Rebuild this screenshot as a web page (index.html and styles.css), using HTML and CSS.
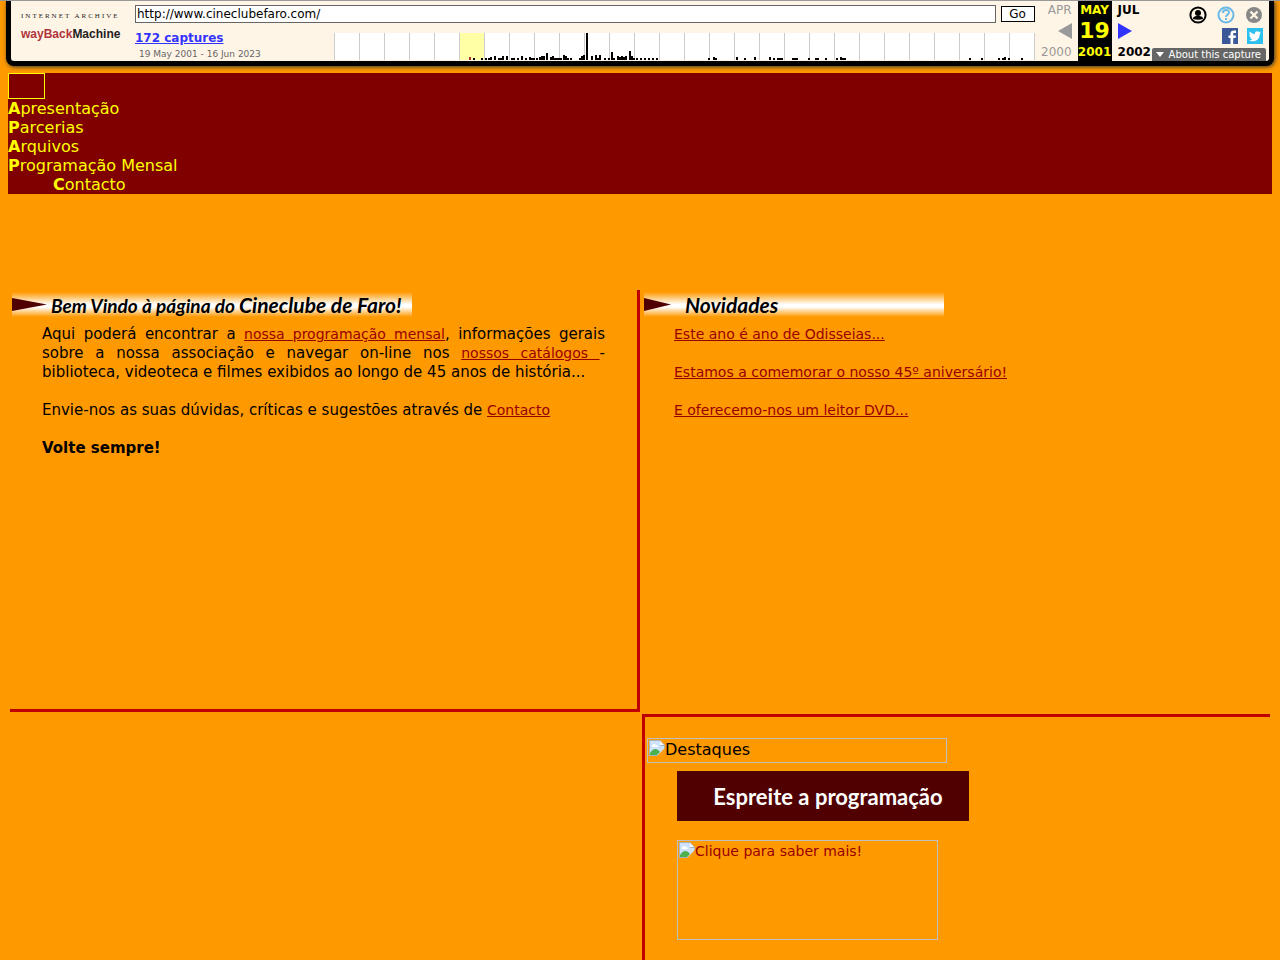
FILE: index.html
```html
<!DOCTYPE html>
<html lang="pt">
<head>
  <meta charset="UTF-8">
  <meta name="viewport" content="width=device-width, initial-scale=1.0">
  <title>Cineclube de Faro</title>
  <link rel="stylesheet" href="styles.css">
</head>
<body>
  <div class="wayback">
    <a class="logo" href="#">
      <span class="logo-small">INTERNET ARCHIVE</span>
      <span class="logo-name"><span class="red">wayBack</span>Machine</span>
    </a>
    <div class="middle">
      <form class="search">
        <input class="url" type="text" aria-label="URL" value="http://www.cineclubefaro.com/">
        <button class="go" type="button">Go</button>
      </form>
      <div class="history">
        <div class="captures">
          <a href="#">172 captures</a>
          <div class="range">19 May 2001 - 16 Jun 2023</div>
        </div>
        <svg class="sparkline" viewBox="0 0 701 27" width="701" height="27" aria-hidden="true">
          <defs>
            <pattern id="years" width="25" height="27" patternUnits="userSpaceOnUse">
              <path d="M0 0h1v27h-1z" fill="#ccc"/>
            </pattern>
          </defs>
          <path d="M0 0h701v27H0z" fill="#fff"/>
          <path d="M125 0h25v27h-25z" fill="#ffffa5"/>
          <path d="M0 0h701v27H0z" fill="url(#years)"/>
          <path d="M136 27v-3" stroke="#a33" stroke-width="2"/>
          <path stroke="#000" stroke-width="2" d="M140 27v-2M148 27v-2M152 27v-2M155 27v-2M157 27v-3M161 27v-4M165 27v-2M167 27v-2M169 27v-4M173 27v-4M178 27v-2M180 27v-2M184 27v-2M188 27v-4M192 27v-2M196 27v-3M198 27v-2M200 27v-2M203 27v-2M206 27v-3M208 27v-4M210 27v-4M213 27v-7M217 27v-3M219 27v-4M221 27v-2M223 27v-2M225 27v-2M227 27v-2M230 27v-5M232 27v-4M234 27v-2M237 27v-2M246 27v-2M248 27v-4M250 27v-5M253 27v-27M258 27v-4M262 27v-5M264 27v-2M266 27v-5M271 27v-2M275 27v-2M278 27v-8M280 27v-2M284 27v-4M286 27v-3M288 27v-4M290 27v-3M292 27v-4M296 27v-9M298 27v-4M300 27v-2M303 27v-2M307 27v-2M311 27v-2M315 27v-2M319 27v-2M323 27v-2M375 27v-2M380 27v-3M382 27v-2M403 27v-3M411 27v-2M421 27v-3M436 27v-3M440 27v-2M444 27v-2M446 27v-2M448 27v-2M459 27v-2M461 27v-2M463 27v-2M475 27v-2M482 27v-2M484 27v-2M492 27v-2M503 27v-2M507 27v-3M509 27v-2M511 27v-2M636 27v-2M648 27v-2M665 27v-2M669 27v-2M671 27v-3M675 27v-2M688 27v-2"/>
        </svg>
      </div>
    </div>
    <div class="dates">
      <div class="date prev">
        <span>APR</span>
        <svg width="14" height="16" viewBox="0 0 14 16"><path d="M14 0v16L0 8z" fill="#999"/></svg>
        <span>2000</span>
      </div>
      <div class="date current">
        <span>MAY</span>
        <span class="day">19</span>
        <span>2001</span>
      </div>
      <div class="date next">
        <a href="#">JUL</a>
        <svg width="14" height="16" viewBox="0 0 14 16"><path d="M0 0v16L14 8z" fill="#33f"/></svg>
        <a href="#">2002</a>
      </div>
    </div>
    <div class="tools">
      <div class="icons">
        <svg width="18" height="18" viewBox="0 0 18 18">
          <circle cx="9" cy="9" r="7.600" fill="none" stroke="#000" stroke-width="2"/>
          <circle cx="9" cy="7" r="3"/>
          <path d="M4 13c0-3 3-3 5-3s5 0 5 3c-3 1-7 1-10 0z"/>
        </svg>
        <svg width="18" height="18" viewBox="0 0 18 18">
          <circle cx="9" cy="9" r="7.500" fill="none" stroke="#6bb9e8" stroke-width="2"/>
          <path d="M6 7c0-4 6-4 6-.5 0 2.200-3 2-3 4.500M9 12v2" fill="none" stroke="#6bb9e8" stroke-width="2"/>
        </svg>
        <svg width="18" height="18" viewBox="0 0 18 18">
          <circle cx="9" cy="9" r="8" fill="#888"/>
          <path d="M5.500 5.500l7 7M12.500 5.500l-7 7" stroke="#fff5e6" stroke-width="2.400"/>
        </svg>
      </div>
      <div class="social">
        <svg width="16" height="16" viewBox="0 0 16 16">
          <path d="M0 0h16v16H0z" fill="#3b5998"/>
          <path d="M8.500 16v-6H6.500V7.500h2V5.800C8.500 3.500 9.800 2.500 12 2.500h2V5h-1.500c-1 0-1.300.4-1.300 1.200v1.300H14L13.600 10h-2.400v6z" fill="#fff"/>
        </svg>
        <svg width="16" height="16" viewBox="0 0 16 16">
          <path d="M0 0h16v16H0z" fill="#2cc0ee"/>
          <path d="M14 4.500l-1.400.4 1-1.400-1.600.6C10 2.200 7.500 3.500 7.900 6 5.800 5.900 4 5 2.700 3.500c-.8 1.500-.3 2.800.8 3.700l-1.200-.3c0 1.200.8 2.200 2 2.600H3.200c.4 1 1.200 1.600 2.300 1.700-1 .8-2.200 1.100-3.500 1 4.500 2.600 10.800.2 10.700-6z" fill="#fff"/>
        </svg>
      </div>
      <button class="about" type="button">
        <svg width="8" height="5" viewBox="0 0 8 5"><path d="M0 0h8L4 5z" fill="#fff"/></svg>
        About this capture
      </button>
    </div>
  </div>

  <nav class="menu">
    <a class="home" href="#" aria-label="Cineclube de Faro"></a>
    <a href="#"><b>A</b>presentação</a>
    <a href="#"><b>P</b>arcerias</a>
    <a href="#"><b>A</b>rquivos</a>
    <a href="#"><b>P</b>rogramação Mensal</a>
    <a class="indent" href="#"><b>C</b>ontacto</a>
  </nav>

  <div class="panels">
    <div class="panel welcome">
      <h2 class="banner wide">
        <svg class="arrow" width="35" height="13" viewBox="0 0 35 13"><path d="M0 0l35 6.500L0 13z" fill="#500000"/></svg>
        <span>Bem Vindo à página do <span class="large">Cineclube de Faro!</span></span>
      </h2>
      <div class="text">
        <p>Aqui poderá encontrar a <a href="#">nossa programação mensal</a>, informações gerais sobre a nossa associação e navegar on-line nos <a href="#">nossos catálogos </a>- biblioteca, videoteca e filmes exibidos ao longo de 45 anos de história...</p>
        <p>Envie-nos as suas dúvidas, críticas e sugestões através de <a href="#">Contacto</a></p>
        <p><b>Volte sempre!</b></p>
      </div>
    </div>
    <div class="panel">
      <h2 class="banner news">
        <svg class="arrow" width="27" height="13" viewBox="0 0 27 13"><path d="M0 0l27 6.500L0 13z" fill="#500000"/></svg>
        <span class="large">Novidades</span>
      </h2>
      <div class="text">
        <p><a href="#">Este ano é ano de Odisseias...</a></p>
        <p><a href="#">Estamos a comemorar o nosso 45º aniversário!</a></p>
        <p><a href="#">E oferecemo-nos um leitor DVD...</a></p>
      </div>
    </div>
    <div class="panel"></div>
    <div class="panel highlights">
      <div class="missing title">
        <svg width="16" height="16" viewBox="0 0 16 16">
          <path d="M0 0h11l5 5v6l-5 5H0z" fill="#aab4bd"/>
          <path d="M1 1h10v5h4v5l-4 4H1z" fill="#cfe2fb"/>
          <path d="M11 1v4h4z" fill="#fff"/>
          <path d="M3 6c0-2 3-3 4-1 2 0 2 2 1 2H3z" fill="#fff"/>
          <path d="M1 15v-2c3-5 7-5 10-1l-3 3z" fill="#4caf50"/>
          <path d="M8 16l8-8v3l-5 5z" fill="#ff9900"/>
        </svg>
        <span>Destaques</span>
      </div>
      <div class="links">
        <a class="program" href="#">Espreite a programação</a>
        <a class="missing photo" href="#">
          <svg width="16" height="16" viewBox="0 0 16 16">
            <path d="M0 0h11l5 5v6l-5 5H0z" fill="#aab4bd"/>
            <path d="M1 1h10v5h4v5l-4 4H1z" fill="#cfe2fb"/>
            <path d="M11 1v4h4z" fill="#fff"/>
            <path d="M3 6c0-2 3-3 4-1 2 0 2 2 1 2H3z" fill="#fff"/>
            <path d="M1 15v-2c3-5 7-5 10-1l-3 3z" fill="#4caf50"/>
            <path d="M8 16l8-8v3l-5 5z" fill="#ff9900"/>
          </svg>
          <span>Clique para saber mais!</span>
        </a>
      </div>
    </div>
  </div>
</body>
</html>
```
FILE: styles.css
```css
* {
  box-sizing: border-box;
}
body {
  margin: 0;
  background-color: #ff9900;
  border-top: 1px solid #999;
  font-family: "DejaVu Sans", sans-serif;
  font-size: 16px;
  line-height: 19px;
  color: #000;
}
svg {
  display: block;
  flex: none;
}

/* archive toolbar */
.wayback {
  display: flex;
  height: 65px;
  margin: 0 6px;
  border: 5px solid #000;
  border-top: 0;
  border-radius: 0 0 8px 8px;
  background-color: #fff5e6;
  box-shadow: 1px 1px 4px #333;
  font-size: 12px;
  line-height: 14px;
}
.logo {
  flex: none;
  width: 124px;
  padding: 10px 0 0 10px;
  text-decoration: none;
  color: #222;
}
.logo-small {
  display: block;
  font-family: "Liberation Serif", serif;
  font-size: 7px;
  line-height: 10px;
  letter-spacing: 2px;
  white-space: nowrap;
}
.logo-name {
  display: block;
  font-family: "Liberation Sans", sans-serif;
  font-size: 12px;
  line-height: 26px;
  font-weight: bold;
}
.logo-name .red {
  color: #b0333b;
}
.middle {
  flex: 1;
  min-width: 0;
}
.search {
  display: flex;
  gap: 5px;
  height: 32px;
  padding-top: 4px;
}
.url {
  flex: 1;
  height: 18px;
  padding: 0 1px;
  border: 1px solid #666;
  background-color: #fff;
  font: 12px "DejaVu Sans", sans-serif;
}
.go {
  width: 34px;
  height: 16px;
  margin-top: 1px;
  padding: 0;
  border: 1px solid #000;
  background-color: #fff;
  font: 12px "DejaVu Sans", sans-serif;
  line-height: 14px;
}
.history {
  display: flex;
  justify-content: space-between;
}
.captures a {
  display: block;
  margin-top: -2px;
  font-weight: bold;
  color: #33f;
}
.range {
  padding: 3px 0 0 4px;
  font-size: 9px;
  line-height: 12px;
  color: #666;
}
.dates {
  display: flex;
  padding-left: 5px;
}
.date {
  display: flex;
  flex-direction: column;
  justify-content: space-between;
  height: 60px;
  padding: 2px 0;
  font-weight: bold;
}
.date a {
  color: #000;
  text-decoration: none;
}
.prev {
  width: 38px;
  padding-right: 6px;
  align-items: flex-end;
  font-weight: normal;
  color: #999;
}
.current {
  width: 34px;
  align-items: center;
  background-color: #000;
  color: #ff0;
}
.day {
  font-size: 22px;
  line-height: 24px;
}
.next {
  width: 40px;
  padding-left: 6px;
}
.tools {
  display: flex;
  flex-direction: column;
  align-items: flex-end;
  padding: 5px 3px 0 0;
}
.icons {
  display: flex;
  gap: 10px;
  padding-right: 3px;
}
.social {
  display: flex;
  gap: 9px;
  padding: 4px 3px 0 0;
}
.about {
  display: flex;
  align-items: center;
  gap: 5px;
  height: 14px;
  margin-top: 4px;
  padding: 0 5px 0 4px;
  border: 0;
  border-radius: 2px 2px 0 0;
  background-color: #666;
  color: #fff;
  font: 10px "DejaVu Sans", sans-serif;
  white-space: nowrap;
}

/* site menu */
.menu {
  display: flex;
  flex-direction: column;
  align-items: flex-start;
  margin: 7px 8px 94px;
  background-color: #800000;
}
.menu a {
  color: #ff0;
  text-decoration: none;
}
.menu .home {
  width: 37px;
  height: 26px;
  border: 1px solid #ff0;
}
.menu .indent {
  margin-left: 45px;
}

/* content */
.panels {
  display: grid;
  grid-template-columns: 315fr 314fr;
  gap: 2px;
  margin: 0 8px;
  padding: 2px;
}
.panel {
  padding: 2px;
}
.welcome {
  min-height: 422px;
  border-right: 3px solid #c00000;
  border-bottom: 3px solid #c00000;
}
.highlights {
  min-height: 246px;
  padding-top: 21px;
  border-top: 3px solid #c00000;
  border-left: 3px solid #c00000;
}
.banner {
  display: flex;
  align-items: center;
  gap: 4px;
  width: 300px;
  height: 25px;
  margin: 0;
  background: linear-gradient(#ff9900, #fff 50%, #fff 60%, #ff9900);
  font-family: Lato, sans-serif;
  font-size: 19px;
  font-style: italic;
  font-weight: bold;
  white-space: nowrap;
}
.banner.wide {
  width: 400px;
}
.banner.news {
  gap: 14px;
}
.banner .large {
  font-size: 21px;
}
.text {
  margin: 8px 30px 0;
  font-size: 15px;
  text-align: justify;
}
.text p {
  margin: 0 0 19px;
}
.text a,
.photo {
  font-size: 14px;
  color: #990000;
}
.missing {
  display: flex;
  align-items: flex-start;
  padding: 1px;
  border: 1px solid #c0c0c0;
}
.title {
  width: 300px;
  height: 25px;
}
.links {
  margin: 8px 30px 0;
}
.program {
  display: flex;
  align-items: center;
  justify-content: center;
  width: 292px;
  height: 50px;
  padding-left: 10px;
  background-color: #500000;
  color: #fff;
  font-family: Lato, sans-serif;
  font-size: 22px;
  font-weight: bold;
  text-decoration: none;
}
.photo {
  width: 261px;
  height: 100px;
  margin-top: 19px;
  text-decoration: none;
}
```
